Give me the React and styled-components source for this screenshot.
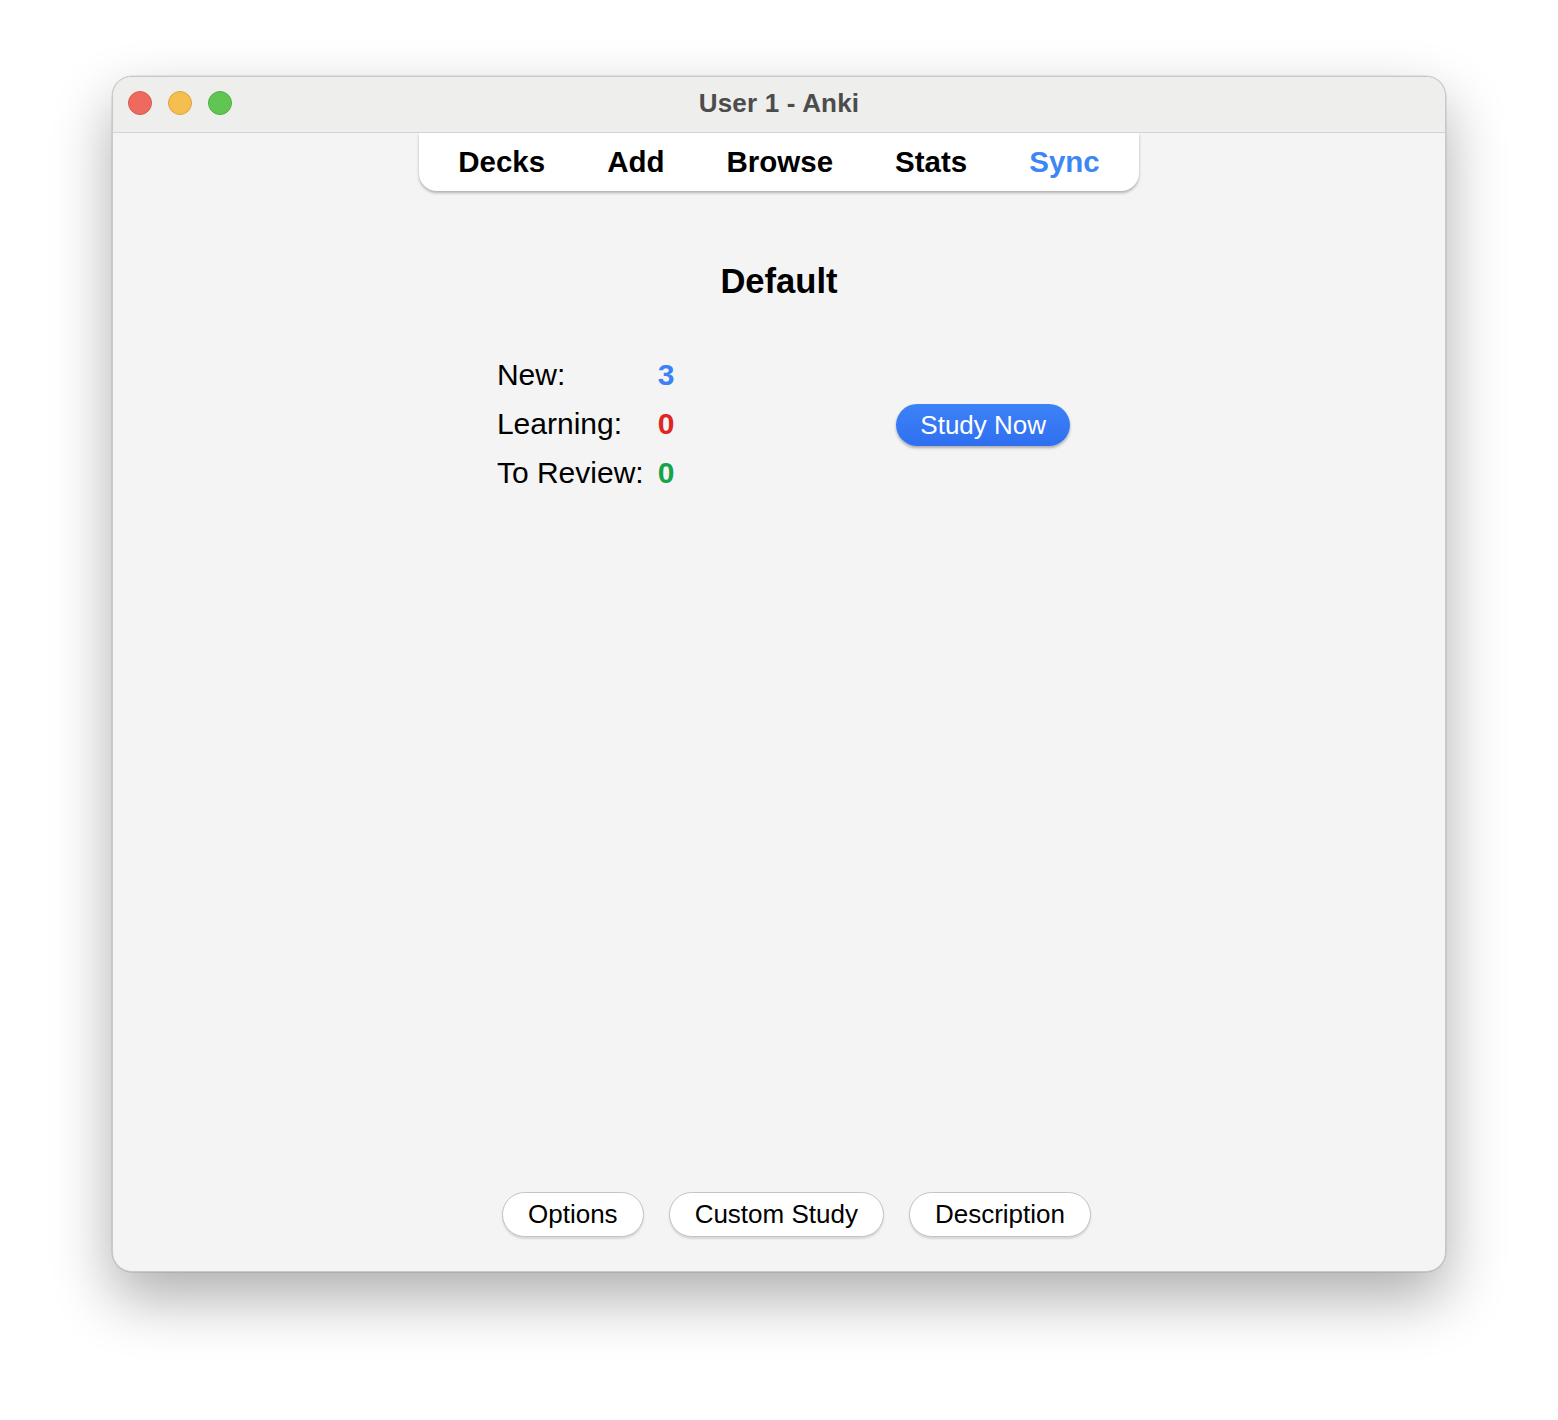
import React from 'react'
import styled, { createGlobalStyle } from 'styled-components'

const GlobalStyle = createGlobalStyle`
  html, body {
    margin: 0;
    padding: 0;
    background: #ffffff;
    font-family: "Liberation Sans", Arial, sans-serif;
  }
`

const Page = styled.div`
  width: 1558px;
  height: 1420px;
  padding: 76px 112px 0;
  box-sizing: border-box;
`

const Window = styled.div`
  width: 1334px;
  height: 1196px;
  display: flex;
  flex-direction: column;
  background: #f4f4f4;
  border-radius: 20px;
  overflow: hidden;
  border: 1px solid #c9c9c9;
  box-sizing: border-box;
  box-shadow: 0 26px 60px rgba(0, 0, 0, 0.32), 0 0 0 0.5px rgba(0, 0, 0, 0.15);
`

const TitleBar = styled.div`
  position: relative;
  height: 55px;
  flex: none;
  display: flex;
  align-items: center;
  justify-content: center;
  background: #eeeeed;
  border-bottom: 1px solid #d3d3d3;
`

const Lights = styled.div`
  position: absolute;
  left: 15px;
  top: 14px;
  display: flex;
  gap: 16px;
`

const Light = styled.span`
  width: 24px;
  height: 24px;
  border-radius: 50%;
  box-sizing: border-box;
  background: ${p => p.$bg};
  border: 1px solid ${p => p.$edge};
`

const Title = styled.div`
  font-size: 26px;
  font-weight: 700;
  color: #4c4c4c;
  letter-spacing: 0.2px;
  margin-top: -2px;
`

const Body = styled.div`
  flex: 1;
  display: flex;
  flex-direction: column;
  align-items: center;
`

const Toolbar = styled.nav`
  display: flex;
  padding: 0 8px;
  height: 58px;
  align-items: center;
  background: #ffffff;
  border-radius: 0 0 18px 18px;
  box-shadow: 0 2px 3px rgba(0, 0, 0, 0.28);
`

const ToolItem = styled.span`
  padding: 0 31px;
  font-size: 29.5px;
  font-weight: 700;
  color: ${p => (p.$active ? '#3d86f6' : '#000000')};
`

const DeckTitle = styled.h1`
  margin: 71px 0 0;
  font-size: 34.6px;
  font-weight: 700;
  color: #000;
  line-height: 38px;
`

const Overview = styled.div`
  display: flex;
  align-items: center;
  margin: 58px 0 0 9px;
  gap: 222px;
`

const StatsGrid = styled.div`
  display: grid;
  grid-template-columns: auto auto;
  column-gap: 14px;
  row-gap: 15px;
  font-size: 30px;
  line-height: 34px;
`

const Label = styled.span`
  color: #000;
`

const Count = styled.span`
  font-weight: 700;
  color: ${p => p.$color};
`

const StudyButton = styled.button`
  height: 42px;
  padding: 0 24px;
  border: none;
  border-radius: 21px;
  background: linear-gradient(#3d82f7, #2f6ff0);
  color: #fff;
  font-family: "Liberation Sans", Arial, sans-serif;
  font-size: 26px;
  box-shadow: 0 2px 3px rgba(0, 0, 0, 0.3);
  margin-top: 2px;
`

const BottomBar = styled.div`
  margin-top: auto;
  display: flex;
  gap: 25px;
  padding: 0 0 34px 35px;
`

const PillButton = styled.button`
  height: 45px;
  padding: 0 25px;
  border: 1px solid #c4c4c4;
  border-radius: 23px;
  background: #fff;
  color: #000;
  font-family: "Liberation Sans", Arial, sans-serif;
  font-size: 26px;
  box-shadow: 0 2px 2px rgba(0, 0, 0, 0.12);
`

const tabs = ['Decks', 'Add', 'Browse', 'Stats', 'Sync']

const stats = [
  { label: 'New:', value: 3, color: '#3b82f6' },
  { label: 'Learning:', value: 0, color: '#e02424' },
  { label: 'To Review:', value: 0, color: '#16a34a' },
]

export default function App() {
  return (
    <Page>
      <GlobalStyle />
      <Window>
        <TitleBar>
          <Lights>
            <Light $bg="#ee6a5f" $edge="#d65a4f" />
            <Light $bg="#f5bf4f" $edge="#d9a43e" />
            <Light $bg="#61c554" $edge="#4fae44" />
          </Lights>
          <Title>User 1 - Anki</Title>
        </TitleBar>
        <Body>
          <Toolbar>
            {tabs.map(t => (
              <ToolItem key={t} $active={t === 'Sync'}>{t}</ToolItem>
            ))}
          </Toolbar>
          <DeckTitle>Default</DeckTitle>
          <Overview>
            <StatsGrid>
              {stats.map(s => (
                <React.Fragment key={s.label}>
                  <Label>{s.label}</Label>
                  <Count $color={s.color}>{s.value}</Count>
                </React.Fragment>
              ))}
            </StatsGrid>
            <StudyButton>Study Now</StudyButton>
          </Overview>
          <BottomBar>
            <PillButton>Options</PillButton>
            <PillButton>Custom Study</PillButton>
            <PillButton>Description</PillButton>
          </BottomBar>
        </Body>
      </Window>
    </Page>
  )
}
